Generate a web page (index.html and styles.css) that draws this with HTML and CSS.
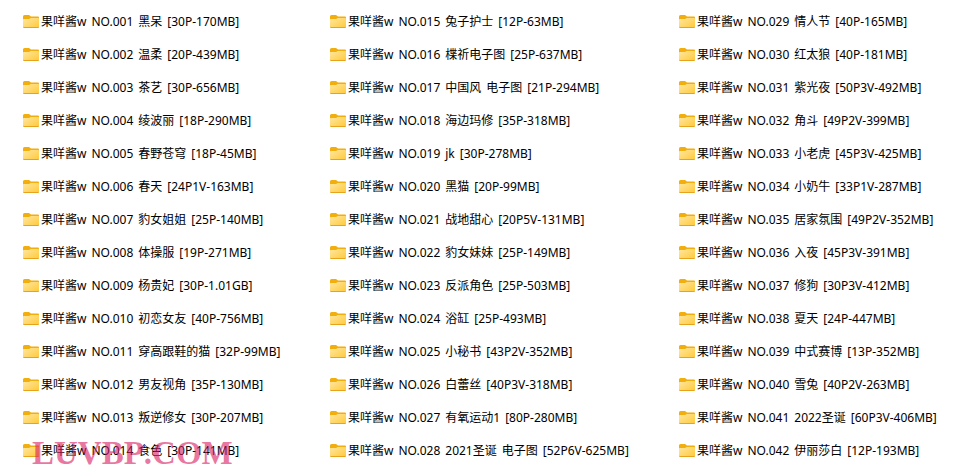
FILE: index.html
```
<!DOCTYPE html>
<html lang="zh-CN">
<head>
<meta charset="utf-8">
<title>果咩酱w</title>
<link rel="stylesheet" href="styles.css">
</head>
<body>
<svg class="defs" aria-hidden="true">
<defs>
<linearGradient id="face" x1="0" y1="0" x2="1" y2="1"><stop offset="0" stop-color="#ffe7a2"/><stop offset="1" stop-color="#ffc937"/></linearGradient>
<symbol id="folder" viewBox="0 0 16 13"><path d="M0 1.5Q0 0 1.5 0H6L8 1.5H15Q16 1.5 16 2.5V6H0Z" fill="#f2ae0c"/><path d="M0 4.6Q0 4 .8 4H6L7.8 3H15.2Q16 3 16 3.8V11.5Q16 13 14.5 13H1.5Q0 13 0 11.5Z" fill="url(#face)"/><path d="M0 11.5Q0 13 1.5 13H14.5Q16 13 16 11.5Q15.6 12.1 14.5 12.1H1.5Q.4 12.1 0 11.5Z" fill="#e6a31b"/></symbol>
</defs>
</svg>
<main class="files" id="files"></main>
<div class="watermark">LUVBP.COM</div>
<script src="files.js"></script>
</body>
</html>
```
FILE: styles.css
```
body {
  margin: 0;
  background: #fff;
  color: #000;
  font-family: "Noto Sans", "Noto Sans CJK SC", sans-serif;
  font-size: 12px;
  line-height: 33px;
}
.defs {
  position: absolute;
  width: 0;
  height: 0;
}
.files {
  display: grid;
  grid-template-columns: 307fr 349fr 276fr;
  padding: 5px 0 8px 23px;
}
.column {
  margin: 0;
  padding: 0;
  list-style: none;
}
.file {
  display: flex;
  align-items: center;
  gap: 2px;
  height: 33px;
  white-space: nowrap;
}
.icon {
  flex: none;
  width: 16px;
  height: 13px;
}
.name {
  display: flex;
  gap: 5px;
}
.watermark {
  position: absolute;
  left: 32px;
  top: 434px;
  color: rgba(217, 27, 97, 0.6);
  font-family: "Liberation Serif", serif;
  font-size: 33px;
  font-weight: 700;
  font-kerning: none;
  line-height: 38px;
  pointer-events: none;
}
```
FILE: files.js
```
const columns = [
  [
    "黑呆 [30P-170MB]", "温柔 [20P-439MB]", "茶艺 [30P-656MB]", "绫波丽 [18P-290MB]",
    "春野苍穹 [18P-45MB]", "春天 [24P1V-163MB]", "豹女姐姐 [25P-140MB]", "体操服 [19P-271MB]",
    "杨贵妃 [30P-1.01GB]", "初恋女友 [40P-756MB]", "穿高跟鞋的猫 [32P-99MB]", "男友视角 [35P-130MB]",
    "叛逆修女 [30P-207MB]", "食色 [30P-141MB]"
  ],
  [
    "兔子护士 [12P-63MB]", "楪祈电子图 [25P-637MB]", "中国风 电子图 [21P-294MB]", "海边玛修 [35P-318MB]",
    "jk [30P-278MB]", "黑猫 [20P-99MB]", "战地甜心 [20P5V-131MB]", "豹女妹妹 [25P-149MB]",
    "反派角色 [25P-503MB]", "浴缸 [25P-493MB]", "小秘书 [43P2V-352MB]", "白蕾丝 [40P3V-318MB]",
    "有氧运动1 [80P-280MB]", "2021圣诞 电子图 [52P6V-625MB]"
  ],
  [
    "情人节 [40P-165MB]", "红太狼 [40P-181MB]", "紫光夜 [50P3V-492MB]", "角斗 [49P2V-399MB]",
    "小老虎 [45P3V-425MB]", "小奶牛 [33P1V-287MB]", "居家氛围 [49P2V-352MB]", "入夜 [45P3V-391MB]",
    "修狗 [30P3V-412MB]", "夏天 [24P-447MB]", "中式赛博 [13P-352MB]", "雪兔 [40P2V-263MB]",
    "2022圣诞 [60P3V-406MB]", "伊丽莎白 [12P-193MB]"
  ]
];

let number = 0;
document.getElementById("files").innerHTML = columns.map(names =>
  `<ul class="column">${names.map(name => {
    number += 1;
    const full = `果咩酱w NO.${String(number).padStart(3, "0")} ${name}`;
    const parts = full.split(" ").map(part => `<span>${part}</span>`).join(" ");
    return `<li class="file"><svg class="icon" aria-hidden="true"><use href="#folder"/></svg><span class="name">${parts}</span></li>`;
  }).join("")}</ul>`
).join("");
```
